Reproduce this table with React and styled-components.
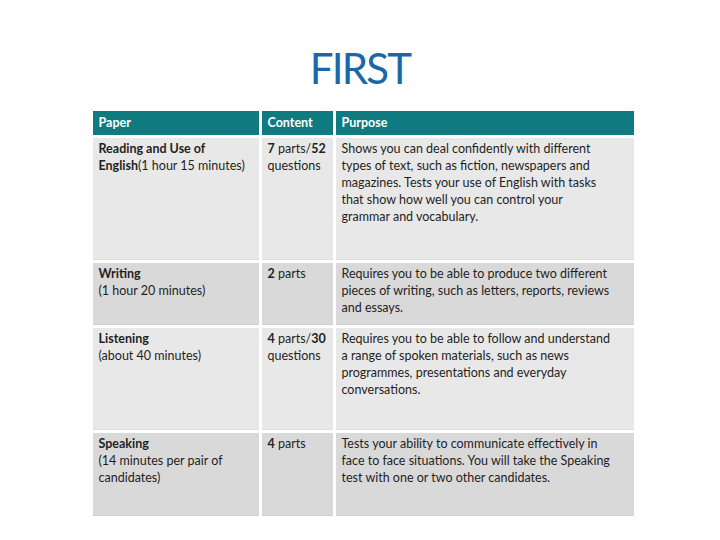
import React from "react";
import styled, { createGlobalStyle } from "styled-components";

const GlobalStyle = createGlobalStyle`
  body {
    margin: 0;
    background: #ffffff;
    font-family: Lato, "Open Sans", sans-serif;
  }
`;

const Page = styled.div`
  width: 720px;
  height: 540px;
  display: flex;
  flex-direction: column;
  align-items: center;
`;

const Title = styled.h1`
  margin: 41px 0 0 0;
  height: 70px;
  font-family: Lato, "Open Sans", sans-serif;
  font-weight: 400;
  font-size: 42px;
  line-height: 54px;
  letter-spacing: -1.8px;
  color: #1a67aa;
`;

const Table = styled.div`
  display: grid;
  grid-template-columns: 166px 71px 298px;
  grid-template-rows: 24px 122px 62px 102px 83px;
  column-gap: 3px;
  row-gap: 3px;
  margin-left: 6px;
`;

const Head = styled.div`
  background: #0f7b80;
  color: #ffffff;
  font-size: 12.5px;
  font-weight: 700;
  line-height: 24px;
  padding-left: 6px;
`;

const Cell = styled.div`
  background: ${(p) => (p.$dark ? "#d9d9d9" : "#e8e8e8")};
  box-shadow: inset 0 -1px 0 rgba(0, 0, 0, 0.04);
  color: #1f1f1f;
  font-size: 12.5px;
  line-height: 17px;
  padding: 2px 6px 0 6px;
  white-space: nowrap;
`;

const rows = [
  {
    paper: [<b key="a">Reading and Use of</b>, <><b>English</b>(1 hour 15 minutes)</>],
    content: [<><b>7</b> parts/<b>52</b></>, "questions"],
    purpose: [
      "Shows you can deal confidently with different",
      "types of text, such as fiction, newspapers and",
      "magazines. Tests your use of English with tasks",
      "that show how well you can control your",
      "grammar and vocabulary.",
    ],
  },
  {
    dark: true,
    paper: [<b key="a">Writing</b>, "(1 hour 20 minutes)"],
    content: [<><b>2</b> parts</>],
    purpose: [
      "Requires you to be able to produce two different",
      "pieces of writing, such as letters, reports, reviews",
      "and essays.",
    ],
  },
  {
    paper: [<b key="a">Listening</b>, "(about 40 minutes)"],
    content: [<><b>4</b> parts/<b>30</b></>, "questions"],
    purpose: [
      "Requires you to be able to follow and understand",
      "a range of spoken materials, such as news",
      "programmes, presentations and everyday",
      "conversations.",
    ],
  },
  {
    dark: true,
    paper: [<b key="a">Speaking</b>, "(14 minutes per pair of", "candidates)"],
    content: [<><b>4</b> parts</>],
    purpose: [
      "Tests your ability to communicate effectively in",
      "face to face situations. You will take the Speaking",
      "test with one or two other candidates.",
    ],
  },
];

const Lines = ({ items }) =>
  items.map((l, i) => <div key={i}>{l}</div>);

export default function App() {
  return (
    <>
      <GlobalStyle />
      <Page>
        <Title>FIRST</Title>
        <Table>
          <Head>Paper</Head>
          <Head>Content</Head>
          <Head>Purpose</Head>
          {rows.map((r, i) => (
            <React.Fragment key={i}>
              <Cell $dark={r.dark}><Lines items={r.paper} /></Cell>
              <Cell $dark={r.dark}><Lines items={r.content} /></Cell>
              <Cell $dark={r.dark}><Lines items={r.purpose} /></Cell>
            </React.Fragment>
          ))}
        </Table>
      </Page>
    </>
  );
}
